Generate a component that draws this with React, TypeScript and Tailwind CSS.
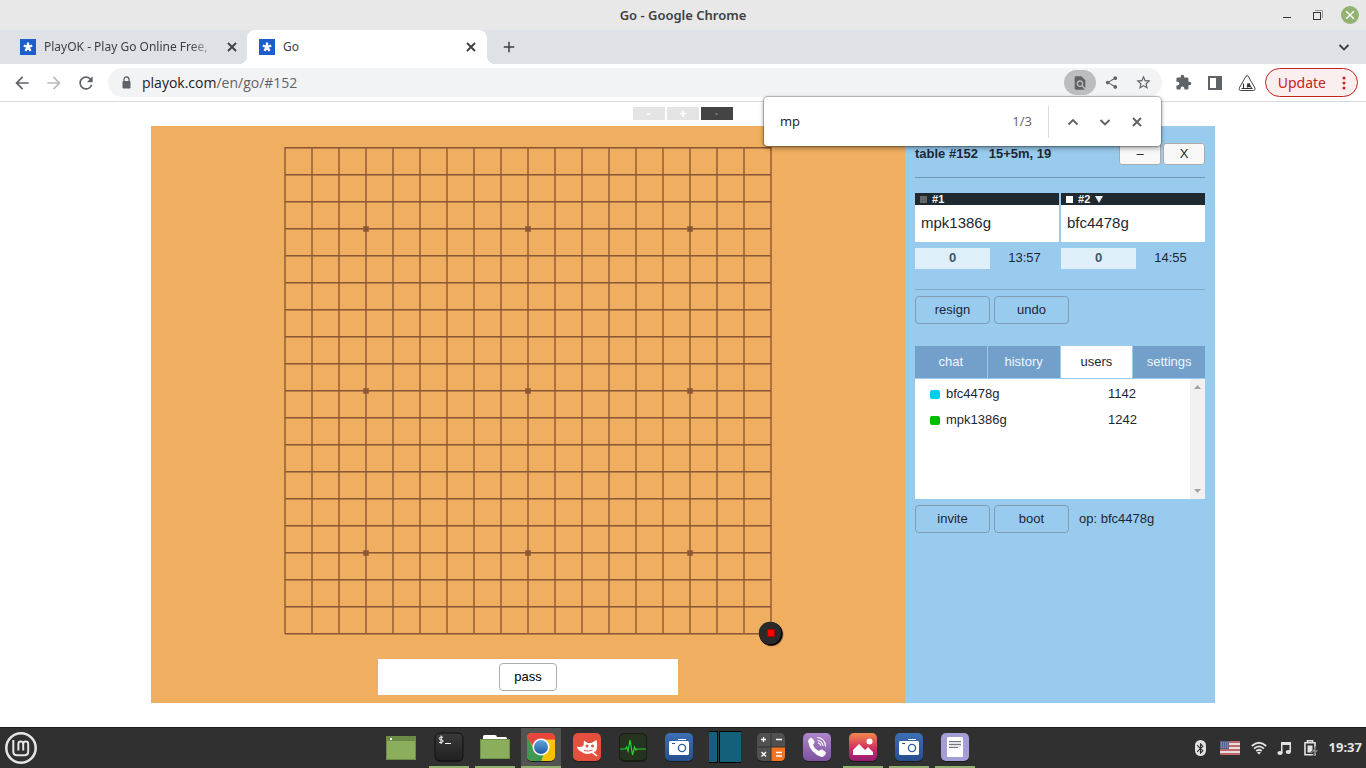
import React, { useState } from "react";
import {
  MdArrowBack, MdArrowForward, MdRefresh, MdLock, MdAdd, MdFindInPage, MdShare,
  MdStarBorder, MdExtension, MdBluetooth,
} from "react-icons/md";

const GLYPHS = {
  close: "M4 4l8 8M12 4l-8 8",
  down: "M3.500 6l4.500 4.500L12.500 6",
  up: "M3.500 10.500L8 6l4.500 4.500",
};

function Glyph({ name }: { name: keyof typeof GLYPHS }) {
  return (
    <svg width="16" height="16" viewBox="0 0 16 16" fill="none" aria-hidden="true">
      <path d={GLYPHS[name]} stroke="currentColor" strokeWidth="1.900" />
    </svg>
  );
}

function Favicon() {
  return (
    <svg width="16" height="16" viewBox="0 0 16 16" className="shrink-0" aria-hidden="true">
      <rect width="16" height="16" fill="#1c5fca" />
      <path d="M8 8V3.600M8 8L12.200 6.600M8 8L10.600 11.800M8 8L5.400 11.800M8 8L3.800 6.600" stroke="#fff" strokeWidth="2.300" strokeLinecap="butt" />
    </svg>
  );
}

function TitleBar() {
  return (
    <header className="grid h-[30px] grid-cols-[1fr_auto_1fr] items-center bg-[#e8e8e8] pr-[7px] pl-[7px]">
      <span />
      <h1 className="pt-px text-[13px] font-semibold text-[#3f3f3f]">Go - Google Chrome</h1>
      <div className="flex items-center justify-end gap-[15px]">
        <button aria-label="Minimize" className="flex size-4 items-center justify-center">
          <svg width="12" height="12" viewBox="0 0 12 12"><path d="M2 8.500h8" stroke="#333" /></svg>
        </button>
        <button aria-label="Restore" className="flex size-4 items-center justify-center">
          <svg width="12" height="12" viewBox="0 0 12 12" fill="none">
            <path d="M3 1.500h7.500v7.500" stroke="#999" />
            <rect x="1.500" y="3.500" width="7" height="7" stroke="#333" />
          </svg>
        </button>
        <button aria-label="Close" className="flex size-[18px] items-center justify-center rounded-full bg-[#92b372]">
          <svg width="10" height="10" viewBox="0 0 10 10"><path d="M1.200 1.200l7.600 7.600M8.800 1.200l-7.600 7.600" stroke="#fff" strokeWidth="1.400" /></svg>
        </button>
      </div>
    </header>
  );
}

function TabStrip() {
  return (
    <nav className="flex h-[34px] items-stretch bg-[#dee1e6] text-[12px] text-[#3c4043]">
      <div className="flex w-[247px] items-center pl-5 pr-[7px]">
        <Favicon />
        <span className="ml-2 flex-1 whitespace-nowrap [mask-image:linear-gradient(to_right,black_85%,transparent)]">
          PlayOK - Play Go Online Free,
        </span>
        <button aria-label="Close tab" className="ml-2"><Glyph name="close" /></button>
      </div>
      <div className="relative flex w-[240px] items-center rounded-t-lg bg-white pr-2 pl-3">
        <span className="absolute bottom-0 -left-2 size-2 bg-[radial-gradient(circle_at_0_0,transparent_8px,white_8px)]" />
        <span className="absolute -right-2 bottom-0 size-2 bg-[radial-gradient(circle_at_100%_0,transparent_8px,white_8px)]" />
        <Favicon />
        <span className="ml-2 flex-1">Go</span>
        <button aria-label="Close tab"><Glyph name="close" /></button>
      </div>
      <button aria-label="New tab" className="ml-[13px]"><MdAdd size={18} /></button>
      <button aria-label="Search tabs" className="mr-[14px] ml-auto"><Glyph name="down" /></button>
    </nav>
  );
}

function FindBar() {
  const [query, setQuery] = useState("mp");
  return (
    <div className="absolute top-[33px] right-[205px] z-10 flex h-[49px] w-[397px] items-center rounded-[4px] bg-white pr-4 pl-4 font-['Open_Sans',sans-serif] text-[13px] shadow-[0_0_1px_1px_rgba(0,0,0,0.25),0_2px_5px_rgba(0,0,0,0.4)]">
      <input aria-label="Find in page" value={query} onChange={(e) => setQuery(e.target.value)} className="w-full min-w-0 flex-1 text-[#202124] outline-none" />
      <span className="text-[#5f6368]">1/3</span>
      <span className="mr-4 ml-4 h-8 w-px bg-[#dadce0]" />
      <div className="flex items-center gap-4 text-[#5f6368]">
        <button aria-label="Previous match"><Glyph name="up" /></button>
        <button aria-label="Next match"><Glyph name="down" /></button>
        <button aria-label="Close find bar"><Glyph name="close" /></button>
      </div>
    </div>
  );
}

function Toolbar() {
  return (
    <div className="relative flex h-[38px] items-center border-b border-[#d8dadd] bg-white pr-2 pl-3 text-[#5f6368]">
      <div className="flex items-center gap-3">
        <button aria-label="Back"><MdArrowBack size={20} /></button>
        <button aria-label="Forward" className="text-[#babcbe]"><MdArrowForward size={20} /></button>
        <button aria-label="Reload"><MdRefresh size={20} /></button>
      </div>
      <div className="ml-3 flex h-[29px] flex-1 items-center rounded-full bg-[#f1f3f4] pr-[10px] pl-3">
        <svg width="13" height="13" viewBox="0 0 13 13" fill="none" aria-hidden="true">
          <path d="M4 6V3.500Q4 1 6.500 1T9 3.500V6" stroke="#5f6368" strokeWidth="1.300" />
          <rect x="2.500" y="5" width="8" height="7.500" rx="1" fill="#5f6368" />
        </svg>
        <span className="ml-[9px] flex-1 font-['Open_Sans',sans-serif] text-[14px] text-[#202124]">
          playok.com<span className="text-[#5f6368]">/en/go/#152</span>
        </span>
        <button aria-label="Find" className="flex h-[25px] w-8 items-center justify-center rounded-full bg-[#bcbdbf]"><MdFindInPage size={16} /></button>
        <button aria-label="Share" className="ml-2"><MdShare size={15} /></button>
        <button aria-label="Bookmark" className="ml-4"><MdStarBorder size={17} /></button>
      </div>
      <div className="ml-[13px] flex items-center gap-[15px]">
        <button aria-label="Extensions"><MdExtension size={17} /></button>
        <button aria-label="Side panel">
          <svg width="16" height="16" viewBox="0 0 16 16"><path d="M1 1h14v14H1zM3 3v10h6V3z" fill="#5f6368" fillRule="evenodd" /></svg>
        </button>
        <button aria-label="Profile">
          <svg width="18" height="18" viewBox="0 0 18 18" fill="none" stroke="#333">
            <path d="M8 2.200Q9 .8 10.200 2.200L17 14.200Q17.500 16.300 15.500 16.500H2.500Q.6 16.300 1.200 14.200Z" strokeWidth=".9" />
            <path d="M5.500 9.500v5M3.500 14.500h11M9.500 10.500v3M12 11.500l1.500 2.500" strokeWidth="1.100" />
            <path d="M9.500 9.500h2.500v3.500h-2.500z" fill="#333" strokeWidth=".3" />
          </svg>
        </button>
      </div>
      <button className="ml-[9px] flex h-[29px] items-center rounded-full border border-[#c5221f] bg-[#fbeeee] pr-[11px] pl-3 text-[14px] text-[#c5221f]">
        Update
        <svg width="4" height="14" viewBox="0 0 4 14" className="ml-4" fill="#c5221f"><circle cx="2" cy="2" r="1.500" /><circle cx="2" cy="7" r="1.500" /><circle cx="2" cy="12" r="1.500" /></svg>
      </button>
      <FindBar />
    </div>
  );
}

const LINES = Array.from({ length: 19 }, (_, i) => 13 + i * 27);
const STARS = [94, 256, 418];

function Board() {
  return (
    <section className="flex flex-1 flex-col items-center bg-[#f0af60] pt-[9px] pb-2">
      <svg width="512" height="512" viewBox="0 0 512 512" shapeRendering="crispEdges" aria-label="Go board" fill="#8c5834">
        {LINES.map((p) => <rect key={"v" + p} x={p - 1} y="12" width="2" height="487" opacity=".7" />)}
        {LINES.map((p) => (
          <g key={"h" + p}>
            <rect x="13" y={p - 1} width="486" height="1" />
            <rect x="13" y={p} width="486" height="1" opacity=".55" />
          </g>
        ))}
        {STARS.map((x) => STARS.map((y) => (
          <g key={x + "-" + y}>
            <rect x={x - 3} y={y - 3} width="6" height="6" opacity=".7" />
            <rect x={x - 2} y={y - 2} width="4" height="4" />
          </g>
        )))}
        <g shapeRendering="auto">
          <circle cx="499.500" cy="499.500" r="12" fill="#b07c40" />
          <circle cx="499" cy="499" r="11.700" fill="#000" />
          <circle cx="498" cy="498" r="11.200" fill="#2a2a2a" />
          <rect x="495" y="494" width="8" height="8" fill="#a00" />
          <rect x="496" y="495" width="6" height="6" fill="#f00" />
        </g>
      </svg>
      <div className="mt-3 flex h-9 w-[300px] items-center justify-center bg-white">
        <button className="h-7 w-[58px] rounded-[4px] border border-[#adadad] text-[13px] text-black">pass</button>
      </div>
    </section>
  );
}

function Seat({ no, name, score, time, open }: { no: number; name: string; score: number; time: string; open?: boolean }) {
  return (
    <div>
      <div className="flex h-3 items-center bg-[#1f2a30] pl-[5px] text-[11px] leading-3 font-bold text-[#f0f4f6]">
        <span className={open ? "size-[7px] bg-white" : "size-[7px] bg-[#666]"} />
        <span className="ml-[5px]">#{no}</span>
        {open && <svg width="8" height="7" viewBox="0 0 8 7" className="ml-[5px]"><path d="M0 0h8L4 7z" fill="#e8eef2" /></svg>}
      </div>
      <div className="flex h-[37px] items-center bg-white pl-[6px] text-[15px]">{name}</div>
      <div className="mt-[6px] flex h-[21px] leading-5">
        <span className="h-full w-[75px] bg-[#deeffa] text-center font-bold text-[#3c566c]">{score}</span>
        <span className="flex-1 text-center">{time}</span>
      </div>
    </div>
  );
}

function PanelButton({ children }: { children: React.ReactNode }) {
  return <button className="h-7 w-[75px] rounded-[4px] border border-[#7f9cb0]">{children}</button>;
}

const USERS = [
  { name: "bfc4478g", rating: 1142, dot: "bg-[#00ccf5]" },
  { name: "mpk1386g", rating: 1242, dot: "bg-[#00bd00]" },
];

function SidePanel() {
  const [tab, setTab] = useState("users");
  return (
    <aside className="w-[310px] shrink-0 bg-[#99cbee] px-[10px] pt-[17px] text-[13px] text-[#1c2733]">
      <div className="flex h-[22px] items-center gap-[2px]">
        <strong className="flex-1 whitespace-pre">table #152   15+5m, 19</strong>
        <button className="h-[22px] w-[42px] rounded-[3px] border border-[#aaa] bg-[#f8f8f8] leading-4">–</button>
        <button className="h-[22px] w-[42px] rounded-[3px] border border-[#aaa] bg-[#f8f8f8] leading-4">X</button>
      </div>
      <hr className="mt-3 mb-[15px] border-[#6f99b9]" />
      <div className="grid grid-cols-2 gap-[2px]">
        <Seat no={1} name="mpk1386g" score={0} time="13:57" />
        <Seat no={2} name="bfc4478g" score={0} time="14:55" open />
      </div>
      <hr className="mt-5 mb-[6px] border-[#82abc9]" />
      <div className="flex gap-1">
        <PanelButton>resign</PanelButton>
        <PanelButton>undo</PanelButton>
      </div>
      <div className="mt-[22px] grid h-8 grid-cols-4 gap-px">
        {["chat", "history", "users", "settings"].map((t) => (
          <button key={t} onClick={() => setTab(t)} className={t === tab ? "bg-white" : "bg-[#73a0ca] text-[#eef5fb]"}>{t}</button>
        ))}
      </div>
      <div className="mt-px flex h-[120px] bg-white">
        <div className="flex-1 pt-[2px]">
          <table className="w-full border-collapse">
            <tbody>
              {USERS.map((u) => (
                <tr key={u.name} className="h-[26px]">
                  <td className="w-[31px] p-0 pl-[15px]"><span className={"block h-[9px] w-[10px] rounded-[2px] " + u.dot} /></td>
                  <td className="p-0">{u.name}</td>
                  <td className="w-[82px] p-0">{u.rating}</td>
                </tr>
              ))}
            </tbody>
          </table>
        </div>
        <div className="flex w-[15px] flex-col items-center justify-between bg-[#f1f1f1] py-[6px]">
          <svg width="7" height="4" viewBox="0 0 7 4"><path d="M0 4L3.500 0L7 4z" fill="#a3a3a3" /></svg>
          <svg width="7" height="4" viewBox="0 0 7 4"><path d="M0 0L3.500 4L7 0z" fill="#a3a3a3" /></svg>
        </div>
      </div>
      <div className="mt-[6px] flex items-center gap-1">
        <PanelButton>invite</PanelButton>
        <PanelButton>boot</PanelButton>
        <span className="ml-[6px]">op: bfc4478g</span>
      </div>
    </aside>
  );
}

function Tile({ fill, children }: { fill: string; children?: React.ReactNode }) {
  return (
    <svg width="30" height="30" viewBox="0 0 30 30" fill="none">
      <rect x="1" y="2" width="28" height="28" rx="5" fill="#1c1c1c" />
      <rect x="1" y="1" width="28" height="28" rx="5" fill={fill} />
      {children}
    </svg>
  );
}

function Camera() {
  return (
    <Tile fill="url(#cam)">
      <defs><linearGradient id="cam" x2="0" y2="1"><stop stopColor="#3d6fb4" /><stop offset="1" stopColor="#254f8d" /></linearGradient></defs>
      <path d="M14 7.500h8" stroke="#fff" />
      <rect x="5" y="9" width="20" height="14" rx="1.500" fill="#fff" />
      <path d="M8 11.500h3" stroke="#27518f" />
      <circle cx="18" cy="16" r="3.600" stroke="#2f5da0" strokeWidth="1.400" />
    </Tile>
  );
}

const APPS: { label: string; open?: boolean; active?: boolean; icon: React.ReactNode }[] = [
  { label: "Desktop", icon: (
    <svg width="30" height="30" viewBox="0 0 30 30"><rect y="4" width="30" height="24" fill="#8aae5c" /><rect y="4" width="30" height="5" fill="#6c8b45" /><rect x="4" y="6" width="2" height="2" fill="#fff" /><path d="M.5 4v23.500h29V4" stroke="#6c8b45" fill="none" /></svg>
  ) },
  { label: "Terminal", open: true, icon: (
    <Tile fill="url(#term)">
      <defs><linearGradient id="term" x2="0" y2="1"><stop stopColor="#3a3a3a" /><stop offset="1" stopColor="#202020" /></linearGradient></defs>
      <rect x="1" y="1" width="28" height="28" rx="5" stroke="#111" />
      <path d="M9 5.200H6.500q-1.300.2-1.300 1.300t1.300 1.300h1.300q1.300.2 1.300 1.300t-1.300 1.300H5M7.100 3.500v8.500" stroke="#fff" />
      <path d="M11 11.500h6" stroke="#fff" />
    </Tile>
  ) },
  { label: "Files", open: true, icon: (
    <svg width="30" height="30" viewBox="0 0 30 30"><path d="M3 8V4.500Q3 3 4.500 3H15q1.500 0 2 2h8.500Q27 5 27 6.500V8z" fill="#fff" /><rect y="7" width="30" height="20" rx="1" fill="#8aae5c" /><path d="M.5 7.500v19h29v-19z" stroke="#718f4b" fill="none" /></svg>
  ) },
  { label: "Google Chrome", open: true, active: true, icon: (
    <Tile fill="#f5c518">
      <defs><clipPath id="chr"><rect x="1" y="1" width="28" height="28" rx="5" /></clipPath><linearGradient id="chb" x2="0" y2="1"><stop stopColor="#65a6dc" /><stop offset="1" stopColor="#1d5c9f" /></linearGradient></defs>
      <g clipPath="url(#chr)">
        <path d="M0 0h30v7.500H15L8 15 0 5z" fill="#e8463c" />
        <path d="M0 3l8.500 15 9 4.500L15 30H0z" fill="#3f9950" />
        <path d="M15 30l8-12 7-10v22z" fill="#f5c000" />
      </g>
      <circle cx="15" cy="15" r="8.500" fill="#fff" />
      <circle cx="15" cy="15" r="7" fill="url(#chb)" />
    </Tile>
  ) },
  { label: "GIMP", icon: (
    <Tile fill="#e54f3d">
      <path d="M5 14.500q4 1.500 6.500-1L12 8.500l3.500 2.500h4L24.500 8q1.500 7-.5 11l-2.500 1 4 3.500-.8 1-5-3.500Q13 23.500 9 19.500 5.500 18 5 14.500z" fill="#fff" />
      <circle cx="15" cy="14" r="1.500" fill="#e54f3d" /><circle cx="20.500" cy="14" r="1.500" fill="#e54f3d" />
      <path d="M12 18.500q5 1.500 8.500-.5" stroke="#e54f3d" />
    </Tile>
  ) },
  { label: "System Monitor", icon: (
    <Tile fill="#25331f"><rect x="1.500" y="1.500" width="27" height="27" rx="5" stroke="#161d13" /><path d="M2 17h5l1.500-2 1.500 4 2-11 2.500 15 2-8 1.500 3 1-1H28" stroke="#2bd433" strokeWidth="1.200" /></Tile>
  ) },
  { label: "Screenshot", icon: <Camera /> },
  { label: "Panes", icon: (
    <svg width="34" height="32" viewBox="0 0 34 32"><rect x="1" width="32" height="32" fill="#000" /><rect x="1" y="1" width="8" height="30" fill="#145f7a" /><rect x="10" y="0" width="1" height="32" fill="#2f4044" /><rect x="12" y="1" width="21" height="30" fill="#145f7a" /></svg>
  ) },
  { label: "Calculator", icon: (
    <Tile fill="#505050">
      <path d="M15 15h14v9q0 5-5 5h-9z" fill="#f47521" />
      <path d="M15 1v28M1 15h28" stroke="#303030" />
      <path d="M5 7.500h5M7.500 5v5M20 7.500h6M5.500 20l4.500 4.500M10 20l-4.500 4.500M20 20.500h6M20 24h6" stroke="#fff" strokeWidth="1.300" />
    </Tile>
  ) },
  { label: "Viber", icon: (
    <Tile fill="url(#vib)">
      <defs><linearGradient id="vib" x2="0" y2="1"><stop stopColor="#ae86cc" /><stop offset="1" stopColor="#7d529f" /></linearGradient></defs>
      <path d="M9 5.500q2 1 3.500 4 .5 1.500-1.500 3 1.500 4.500 6 6.500 1.500-2 3-1.500 3.500 1.500 4 3.500-1.500 4-4.500 4Q8 21 6 9q1-3 3-3.500z" fill="#fff" />
      <path d="M15 5.500q8 .5 8.500 9M15.500 8.500q5 .5 5.500 5.500M16 11q2.500.3 2.700 2.800" stroke="#fff" strokeWidth="1.200" />
    </Tile>
  ) },
  { label: "Image Viewer", open: true, icon: (
    <Tile fill="url(#img)">
      <defs><linearGradient id="img" x2="0" y2="1"><stop stopColor="#f0894a" /><stop offset=".55" stopColor="#d22f62" /><stop offset="1" stopColor="#951c71" /></linearGradient></defs>
      <path d="M5 23v-5l6-6 6 6 3-3 5 5v3z" fill="#fff" /><circle cx="21.500" cy="9.500" r="3" fill="#fff" />
    </Tile>
  ) },
  { label: "Screenshot window", open: true, icon: <Camera /> },
  { label: "Text Editor", open: true, icon: (
    <Tile fill="#a39fd6"><rect x="7" y="5" width="16" height="20" rx="1" fill="#fff" /><path d="M9 9.500h12M9 12.500h12M9 15.500h9" stroke="#777" /><path d="M9 11h12M9 14h12" stroke="#c5c5d8" /></Tile>
  ) },
];

function Taskbar() {
  return (
    <footer className="grid h-[41px] grid-cols-[1fr_auto_1fr] items-center border-t border-[#1f1f1f] bg-[#303030] px-1">
      <button aria-label="Menu" className="justify-self-start">
        <svg width="34" height="34" viewBox="0 0 34 34" fill="none" stroke="#e6e6e6">
          <circle cx="17" cy="17" r="14.700" strokeWidth="2.500" />
          <path d="M9.300 9v11.500q0 3.700 3.700 3.700h7.500q3.700 0 3.700-3.700v-7.500q0-2.400-2.500-2.400t-2.500 2.400v6.500M19.200 13q0-2.400-2.400-2.400t-2.400 2.400v6.500" strokeWidth="2" />
        </svg>
      </button>
      <div className="flex gap-[6px] self-stretch pr-[10px]">
        {APPS.map((a, i) => (
          <button key={a.label} aria-label={a.label} className={"flex w-10 items-center justify-center border-b-2 " + (a.open ? "border-[#90b070] " : "border-transparent ") + (a.active ? "bg-[#535353] " : "") + (i === 0 ? "mr-[2px]" : "")}>
            {a.icon}
          </button>
        ))}
      </div>
      <div className="flex items-center justify-self-end text-[#e3e3e3]">
        <span className="flex h-4 w-[11px] items-center justify-center rounded-full bg-[#e3e3e3] text-[#303030]"><MdBluetooth size={13} className="shrink-0" /></span>
        <svg width="20" height="14" viewBox="0 0 20 14" className="ml-[14px]">
          <rect width="20" height="14" fill="#e6dede" />
          <path d="M0 1h20M0 5h20M0 9h20M0 13h20" stroke="#c5676a" strokeWidth="2" />
          <rect width="9" height="8" fill="#53638f" />
          <path d="M1 2h8M1 4h8M1 6h8" stroke="#a3acc4" strokeDasharray="1 1" />
        </svg>
        <svg width="16" height="14" viewBox="0 0 16 14" className="ml-[11px]" fill="none" stroke="#e3e3e3" strokeWidth="1.800">
          <path d="M.8 5q7.200-6.500 14.400 0M3 7.600q5-4.500 10 0M5.200 10q2.800-2.500 5.600 0" /><path d="M8 13.500l-2-2q2-1.500 4 0z" fill="#e3e3e3" stroke="none" />
        </svg>
        <svg width="14" height="14" viewBox="0 0 14 14" className="ml-[10px]" fill="#e3e3e3">
          <path d="M4 1h10v10h-1.500V4h-7v8H4z" /><ellipse cx="3" cy="12" rx="2.600" ry="1.900" /><ellipse cx="11.300" cy="11" rx="2.600" ry="1.900" />
        </svg>
        <svg width="15" height="16" viewBox="0 0 15 16" className="ml-[13px]" fill="none">
          <path d="M3.500 2V.8h5V2M1 2.800h10v12H1z" stroke="#e3e3e3" strokeWidth="1.600" />
          <path d="M3.500 5.500h5v7h-5z" fill="#e3e3e3" /><path d="M12.500 6L7 12h3l-1 4 5.500-6h-3z" fill="#8c8c8c" stroke="#303030" strokeWidth=".5" />
        </svg>
        <time className="ml-[10px] text-[13px] font-bold">19:37</time>
      </div>
    </footer>
  );
}

export default function App() {
  return (
    <div className="flex min-h-screen flex-col bg-white font-['Noto_Sans',sans-serif]">
      <TitleBar />
      <TabStrip />
      <Toolbar />
      <main className="flex-1 font-['Liberation_Sans',Arial,sans-serif]">
        <div className="flex justify-center gap-[2px] pt-[5px] pb-[6px] text-[13px] leading-[13px] font-bold">
          <button className="h-[13px] w-8 bg-[#e4e4e4] text-white">-</button>
          <button className="h-[13px] w-8 bg-[#e4e4e4] text-white">+</button>
          <button className="h-[13px] w-8 bg-[#444] text-[#6d8296]">·</button>
        </div>
        <div className="mx-auto flex w-full max-w-[1064px]">
          <Board />
          <SidePanel />
        </div>
      </main>
      <Taskbar />
    </div>
  );
}
